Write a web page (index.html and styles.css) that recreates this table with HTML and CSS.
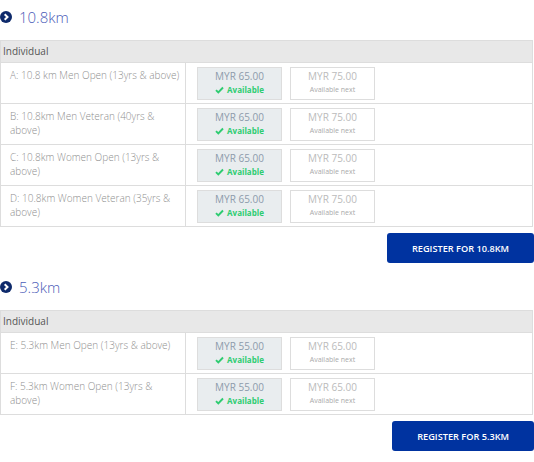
FILE: index.html
```html
<!DOCTYPE html>
<html>
<head>
<meta charset="utf-8">
<link rel="stylesheet" href="styles.css">
</head>
<body>
<section class="race">
  <h2 class="race-title"><svg class="chev" width="12" height="12" viewBox="0 0 12 12"><circle cx="6" cy="6" r="6" fill="#0e2a6b"/><path d="M4.7 3.2 L7.5 6 L4.7 8.8" fill="none" stroke="#fff" stroke-width="2"/></svg><span>10.8km</span></h2>
  <div class="table">
    <div class="thead">Individual</div>
    <div class="row"><div class="cat">A: 10.8 km Men Open (13yrs &amp; above)</div><div class="prices"><div class="price now"><div class="amt">MYR 65.00</div><div class="status"><svg width="9" height="8" viewBox="0 0 9 8"><path d="M1 4.2 L3.3 6.5 L8 1.5" fill="none" stroke="#2ecc71" stroke-width="1.9"/></svg>Available</div></div><div class="price next"><div class="amt">MYR 75.00</div><div class="status">Available next</div></div></div></div>
    <div class="row"><div class="cat">B: 10.8km Men Veteran (40yrs &amp; above)</div><div class="prices"><div class="price now"><div class="amt">MYR 65.00</div><div class="status"><svg width="9" height="8" viewBox="0 0 9 8"><path d="M1 4.2 L3.3 6.5 L8 1.5" fill="none" stroke="#2ecc71" stroke-width="1.9"/></svg>Available</div></div><div class="price next"><div class="amt">MYR 75.00</div><div class="status">Available next</div></div></div></div>
    <div class="row"><div class="cat">C: 10.8km Women Open (13yrs &amp; above)</div><div class="prices"><div class="price now"><div class="amt">MYR 65.00</div><div class="status"><svg width="9" height="8" viewBox="0 0 9 8"><path d="M1 4.2 L3.3 6.5 L8 1.5" fill="none" stroke="#2ecc71" stroke-width="1.9"/></svg>Available</div></div><div class="price next"><div class="amt">MYR 75.00</div><div class="status">Available next</div></div></div></div>
    <div class="row"><div class="cat">D: 10.8km Women Veteran (35yrs &amp; above)</div><div class="prices"><div class="price now"><div class="amt">MYR 65.00</div><div class="status"><svg width="9" height="8" viewBox="0 0 9 8"><path d="M1 4.2 L3.3 6.5 L8 1.5" fill="none" stroke="#2ecc71" stroke-width="1.9"/></svg>Available</div></div><div class="price next"><div class="amt">MYR 75.00</div><div class="status">Available next</div></div></div></div>
  </div>
  <div class="actions"><button class="btn">REGISTER FOR 10.8KM</button></div>
</section>
<section class="race">
  <h2 class="race-title"><svg class="chev" width="12" height="12" viewBox="0 0 12 12"><circle cx="6" cy="6" r="6" fill="#0e2a6b"/><path d="M4.7 3.2 L7.5 6 L4.7 8.8" fill="none" stroke="#fff" stroke-width="2"/></svg><span>5.3km</span></h2>
  <div class="table">
    <div class="thead">Individual</div>
    <div class="row"><div class="cat">E: 5.3km Men Open (13yrs &amp; above)</div><div class="prices"><div class="price now"><div class="amt">MYR 55.00</div><div class="status"><svg width="9" height="8" viewBox="0 0 9 8"><path d="M1 4.2 L3.3 6.5 L8 1.5" fill="none" stroke="#2ecc71" stroke-width="1.9"/></svg>Available</div></div><div class="price next"><div class="amt">MYR 65.00</div><div class="status">Available next</div></div></div></div>
    <div class="row"><div class="cat">F: 5.3km Women Open (13yrs &amp; above)</div><div class="prices"><div class="price now"><div class="amt">MYR 55.00</div><div class="status"><svg width="9" height="8" viewBox="0 0 9 8"><path d="M1 4.2 L3.3 6.5 L8 1.5" fill="none" stroke="#2ecc71" stroke-width="1.9"/></svg>Available</div></div><div class="price next"><div class="amt">MYR 65.00</div><div class="status">Available next</div></div></div></div>
  </div>
  <div class="actions"><button class="btn">REGISTER FOR 5.3KM</button></div>
</section>
</body>
</html>
```
FILE: styles.css
```css
html, body { margin: 0; padding: 0; background: #fff; }
body { font-family: "Open Sans", "DejaVu Sans", sans-serif; padding-top: 5px; width: 534px; overflow: hidden; }
.race-title { margin: 0 0 11px 0; height: 24px; display: flex; align-items: center; font-weight: 300; font-size: 15px; color: #4b5cb8; }
.race-title .chev { margin-right: 7px; flex: none; }
.table { width: 531px; border: 1px solid #dddddd; }
.thead { background: #e8e8e8; height: 21px; line-height: 21px; font-size: 10px; color: #555; padding-left: 2px; border-bottom: 1px solid #dddddd; }
.row { display: flex; height: 40px; border-bottom: 1px solid #dddddd; }
.row:last-child { border-bottom: none; }
.cat { width: 171px; padding: 5px 4px 0 9px; border-right: 1px solid #dddddd; font-size: 10px; font-weight: 300; line-height: 14px; color: #8f8f8f; }
.prices { display: flex; gap: 8px; padding: 4px 0 0 11px; }
.price { width: 83px; height: 30px; border: 1px solid #dddddd; text-align: center; padding-top: 1px; }
.price.now { background: #e9edef; }
.price.next { background: #fff; }
.amt { font-size: 10px; line-height: 15px; height: 15px; }
.now .amt { color: #8d9bab; }
.next .amt { color: #bbbbbb; }
.status { font-size: 8px; line-height: 11px; display: flex; justify-content: center; align-items: center; gap: 3px; }
.now .status { color: #2ecc71; font-weight: 700; }
.next .status { color: #aaaaaa; font-size: 7px; }
.actions { display: flex; justify-content: flex-end; margin: 6px 0 12px 0; }
.btn { height: 30px; padding: 0 25px; background: #0033a0; color: #fff; border: none; border-radius: 3px; font-family: "Open Sans", sans-serif; font-weight: 600; font-size: 9.2px; letter-spacing: 0; }
```
